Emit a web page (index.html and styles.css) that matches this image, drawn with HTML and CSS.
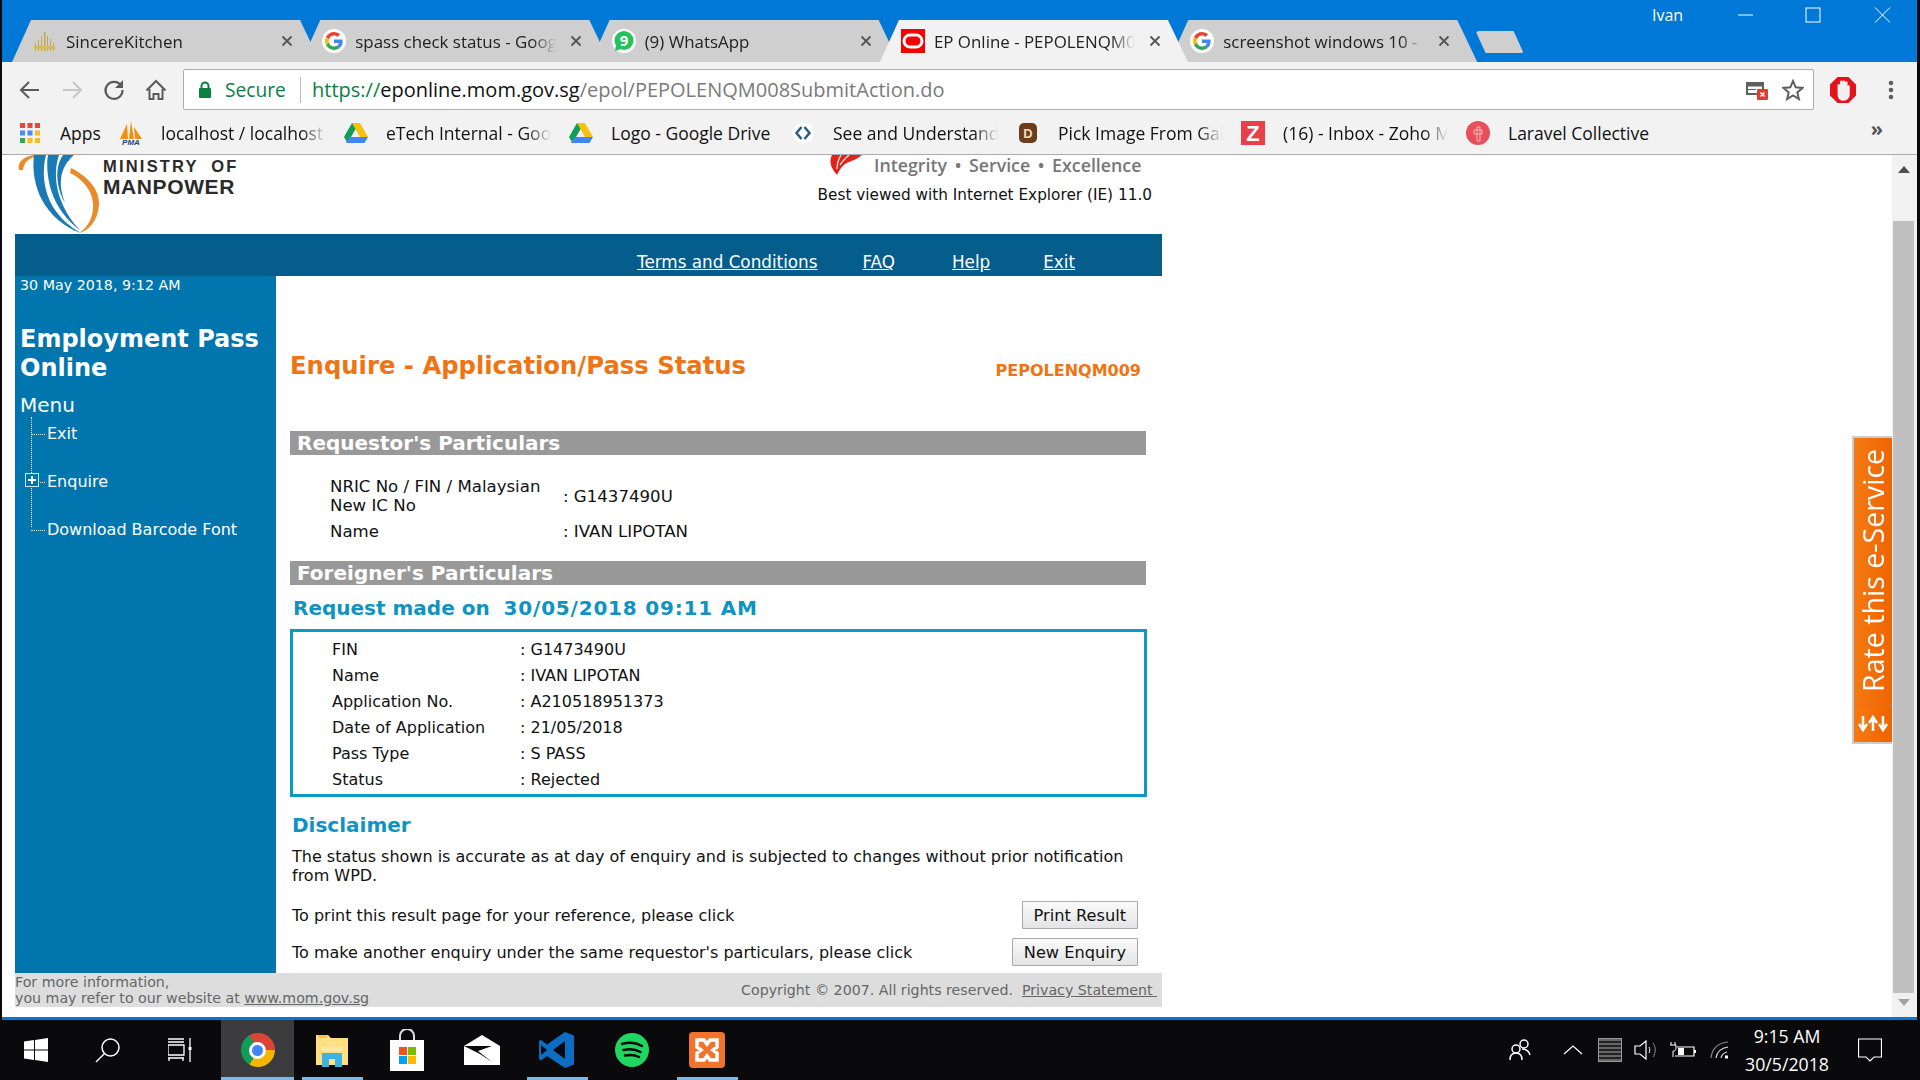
FILE: index.html
```html
<!DOCTYPE html>
<html lang="en">
<head>
<meta charset="utf-8">
<title>EP Online - PEPOLENQM009</title>
<link rel="stylesheet" href="styles.css">
</head>
<body>
<svg class="defs" width="0" height="0" aria-hidden="true">
  <symbol id="g" viewBox="-8 -8 64 64">
    <circle cx="24" cy="24" r="32" fill="#fff"/>
    <path fill="#EA4335" d="M24 9.5c3.54 0 6.71 1.22 9.21 3.6l6.85-6.85C35.9 2.38 30.47 0 24 0 14.62 0 6.51 5.38 2.56 13.22l7.98 6.19C12.43 13.72 17.74 9.5 24 9.5z"/>
    <path fill="#4285F4" d="M46.98 24.55c0-1.57-.15-3.09-.38-4.55H24v9.02h12.94c-.58 2.96-2.26 5.48-4.78 7.18l7.73 6c4.51-4.18 7.09-10.36 7.09-17.65z"/>
    <path fill="#FBBC05" d="M10.53 28.59c-.48-1.45-.76-2.99-.76-4.59s.27-3.14.76-4.59l-7.98-6.19C.92 16.46 0 20.12 0 24c0 3.88.92 7.54 2.56 10.78l7.97-6.19z"/>
    <path fill="#34A853" d="M24 48c6.48 0 11.93-2.13 15.89-5.81l-7.73-6c-2.15 1.45-4.92 2.3-8.16 2.3-6.26 0-11.57-4.22-13.47-9.91l-7.98 6.19C6.51 42.62 14.62 48 24 48z"/>
  </symbol>
  <symbol id="drive" viewBox="0 0 24 22">
    <path fill="#0f9d58" d="M8 1h7L7 15l-3.500 6L0 15z"/>
    <path fill="#f4c20d" d="M8 1h8l8 14h-8z"/>
    <path fill="#4285f4" d="M5.500 15H24l-3.500 6H2z"/>
  </symbol>
  <symbol id="x" viewBox="0 0 12 12">
    <path d="M1.500 1.500l9 9M10.500 1.500l-9 9" stroke="#555" stroke-width="1.800" fill="none"/>
  </symbol>
</svg>

<div class="window">
  <header class="titlebar">
    <div class="winctl">
      <span class="user">Ivan</span>
      <svg class="ctl" width="20" height="12" viewBox="0 0 20 12"><path d="M4 6h15" stroke="#fff"/></svg>
      <svg class="ctl" width="20" height="16" viewBox="0 0 20 16"><rect x="3" y="1" width="14" height="14" fill="none" stroke="#fff"/></svg>
      <svg class="ctl" width="20" height="16" viewBox="0 0 20 16"><path d="M3 0.500l15 15M18 0.500l-15 15" stroke="#fff" fill="none"/></svg>
    </div>
    <div class="tabs">
      <div class="tab">
        <svg class="fav" width="24" height="20" viewBox="0 0 24 20"><path d="M2 20V12h1v8zM5 20V9h1v11zM8 20V5h1v15zM11 20V1h1.500v19zM14 20V5h1v15zM17 20V8h1v12zM20 20V12h1v8z" fill="#c9a64a"/><path d="M1 15h21v3H1z" fill="#d9b95f"/></svg>
        <span class="tab-title">SincereKitchen</span>
        <svg class="tab-x" width="12" height="12"><use href="#x"/></svg>
      </div>
      <div class="tab">
        <svg class="fav" width="24" height="24"><use href="#g"/></svg>
        <span class="tab-title">spass check status - Goog</span>
        <svg class="tab-x" width="12" height="12"><use href="#x"/></svg>
      </div>
      <div class="tab">
        <svg class="fav" width="24" height="24" viewBox="0 0 24 24"><circle cx="12" cy="12" r="12" fill="#fff"/><circle cx="12" cy="11.500" r="9.500" fill="#25c15b"/><path d="M4 16l-1 6 6-2z" fill="#25c15b"/><text x="12" y="16.500" class="wa">9</text></svg>
        <span class="tab-title">(9) WhatsApp</span>
        <svg class="tab-x" width="12" height="12"><use href="#x"/></svg>
      </div>
      <div class="tab tab-active">
        <svg class="fav" width="24" height="24" viewBox="0 0 24 24"><rect width="24" height="24" fill="#f80000"/><rect x="3" y="6" width="18" height="12" rx="6" fill="none" stroke="#fff" stroke-width="3"/></svg>
        <span class="tab-title">EP Online - PEPOLENQM0</span>
        <svg class="tab-x" width="12" height="12"><use href="#x"/></svg>
      </div>
      <div class="tab">
        <svg class="fav" width="24" height="24"><use href="#g"/></svg>
        <span class="tab-title">screenshot windows 10 -</span>
        <svg class="tab-x" width="12" height="12"><use href="#x"/></svg>
      </div>
      <div class="newtab"></div>
    </div>
  </header>

  <div class="toolbar">
    <svg class="nav" width="22" height="20" viewBox="0 0 22 20"><path d="M20 10H3M10 2l-8 8 8 8" fill="none" stroke="#5a5a5a" stroke-width="2"/></svg>
    <svg class="nav" width="22" height="20" viewBox="0 0 22 20"><path d="M2 10h17M12 2l8 8-8 8" fill="none" stroke="#c8c8c8" stroke-width="2"/></svg>
    <svg class="nav" width="22" height="22" viewBox="0 0 22 22"><path d="M18 6.500A8.500 8.500 0 1 0 19.500 11" fill="none" stroke="#5a5a5a" stroke-width="2.200"/><path d="M20 1v8h-8z" fill="#5a5a5a"/></svg>
    <svg class="nav" width="22" height="22" viewBox="0 0 22 22"><path d="M1.500 11.500L11 2l9.500 9.500M4.500 10v10h4v-5h5v5h4V10" fill="none" stroke="#5a5a5a" stroke-width="2"/></svg>
    <div class="omnibox">
      <svg class="lock" width="14" height="18" viewBox="0 0 14 18"><path d="M3.500 8V5a3.500 3.500 0 0 1 7 0v3" fill="none" stroke="#0b8043" stroke-width="2"/><rect x="1" y="7" width="12" height="10" rx="1" fill="#0b8043"/></svg>
      <span class="secure">Secure</span>
      <span class="sep"></span>
      <span class="url"><span class="url-g">https://</span><span class="url-d">eponline.mom.gov.sg</span>/epol/PEPOLENQM008SubmitAction.do</span>
      <svg class="omni-ic" width="22" height="20" viewBox="0 0 22 20"><path d="M1 3h16v11H1z" fill="none" stroke="#5f5f5f" stroke-width="2"/><path d="M1 3h16v3H1zM1 9.500h9" fill="#5f5f5f" stroke="#5f5f5f"/><rect x="11" y="9" width="11" height="11" rx="1" fill="#dd3b33"/><path d="M14.500 12.500l4 4M18.500 12.500l-4 4" stroke="#fff" stroke-width="1.500"/></svg>
      <svg class="omni-ic omni-star" width="22" height="22" viewBox="0 0 22 22"><path d="M11 2l2.700 6.300 6.800.6-5.200 4.500 1.600 6.700L11 16.500 5.100 20.100l1.600-6.700L1.500 8.900l6.800-.6z" fill="none" stroke="#5f5f5f" stroke-width="2"/></svg>
    </div>
    <svg class="stop" width="24" height="24" viewBox="0 0 24 24"><path d="M7 0h10l7 7v10l-7 7H7l-7-7V7z" fill="#e4121b"/><path d="M7 7.500a1.100 1.100 0 0 1 2.200 0V4.500a1.200 1.200 0 0 1 2.400 0a1.200 1.200 0 0 1 2.400 0V5a1.100 1.100 0 0 1 2.200 0v3.500a1 1 0 0 1 2 0V16c0 3-2 6-6 6s-5-3-5.200-6z" fill="#f1f1f1"/></svg>
    <svg class="dots" width="6" height="20" viewBox="0 0 6 20"><circle cx="3" cy="3" r="2.300" fill="#5f5f5f"/><circle cx="3" cy="10" r="2.300" fill="#5f5f5f"/><circle cx="3" cy="17" r="2.300" fill="#5f5f5f"/></svg>
  </div>

  <nav class="bookmarks">
    <div class="bm bm-apps">
      <svg class="bm-ic" width="20" height="20" viewBox="0 0 20 20"><g fill="#e8453c"><rect width="5" height="5"/><rect x="7.500" width="5" height="5"/><rect x="15" width="5" height="5"/></g><g fill="#4a8af4"><rect y="7.500" width="5" height="5"/><rect x="7.500" y="7.500" width="5" height="5"/></g><rect x="15" y="7.500" width="5" height="5" fill="#f9bb2d"/><g fill="#34a853"><rect y="15" width="5" height="5"/></g><g fill="#f9bb2d"><rect x="7.500" y="15" width="5" height="5"/></g><rect x="15" y="15" width="5" height="5" fill="#f9bb2d"/></svg>
      <span class="bm-text bm-full">Apps</span>
    </div>
    <div class="bm">
      <svg class="bm-ic" width="24" height="24" viewBox="0 0 24 24"><path d="M1 18L8 3l1 15zM10 18l2-18 3 18zM16 18l-1-12 8 12z" fill="#f29111"/><text x="12" y="24" class="pma">PMA</text></svg>
      <span class="bm-text">localhost / localhost</span>
    </div>
    <div class="bm">
      <svg class="bm-ic" width="24" height="22"><use href="#drive"/></svg>
      <span class="bm-text">eTech Internal - Goog</span>
    </div>
    <div class="bm bm-short">
      <svg class="bm-ic" width="24" height="22"><use href="#drive"/></svg>
      <span class="bm-text bm-full">Logo - Google Drive</span>
    </div>
    <div class="bm">
      <svg class="bm-ic" width="22" height="22" viewBox="0 0 22 22"><circle cx="11" cy="11" r="10.500" fill="#fff"/><path d="M9.500 5l-5 6 5 6M12.500 5l5 6-5 6" fill="none" stroke="#2b5d7d" stroke-width="2.500"/></svg>
      <span class="bm-text">See and Understand</span>
    </div>
    <div class="bm">
      <svg class="bm-ic" width="18" height="20" viewBox="0 0 18 20"><rect width="18" height="20" rx="5" fill="#6d3d1a"/><text x="9" y="15" class="dee">D</text></svg>
      <span class="bm-text">Pick Image From Gal</span>
    </div>
    <div class="bm">
      <svg class="bm-ic" width="24" height="24" viewBox="0 0 24 24"><rect width="24" height="24" fill="#e8404a"/><text x="12" y="20" class="zed">Z</text></svg>
      <span class="bm-text">(16) - Inbox - Zoho M</span>
    </div>
    <div class="bm">
      <svg class="bm-ic" width="24" height="24" viewBox="0 0 24 24"><circle cx="12" cy="12" r="12" fill="#e5505a"/><path d="M8 9h8v4H8zM11 6h3v14h-3z" fill="none" stroke="#f5b5b9"/></svg>
      <span class="bm-text bm-full">Laravel Collective</span>
    </div>
    <span class="chev">»</span>
  </nav>

  <div class="viewport">
    <div class="page">
      <div class="page-head">
        <div class="logo">
          <svg class="logo-mark" width="88" height="79" viewBox="0 0 88 79">
            <path d="M4 15C2 8 8 1 20 0L21 2C13 3 9 8 8 15z" fill="#e98a2b"/>
            <path d="M19 0L31 0C27 15 28 35 38 52C45 63 55 72 66 78C50 73 35 60 27 45C20 32 17 15 19 0z" fill="#1a7ab5"/>
            <path d="M33 0L44 0C39 14 40 32 47 48C52 60 58 68 66 76C52 66 42 52 37 38C33 26 31 12 33 0z" fill="#1a7ab5"/>
            <path d="M48 0L59 0C52 6 47 14 46 24C45 32 47 40 50 48C43 36 41 22 43 12C44 7 46 3 48 0z" fill="#1a7ab5"/>
            <path d="M56 13C70 20 84 32 84 48C84 64 74 76 64 78C74 72 79 60 78 48C77 36 68 24 55 18z" fill="#e98a2b"/>
          </svg>
          <div class="logo-text">
            <span class="logo-1">MINISTRY OF</span>
            <span class="logo-2">MANPOWER</span>
          </div>
        </div>
        <div class="head-right">
          <div class="motto">
            <svg width="33" height="20" viewBox="0 0 33 20"><path d="M3 0C0 6 1 12 8 20C11 14 14 9 20 7C25 5 30 3 33 0z" fill="#e2231a"/><path d="M12 0C9 5 8 9 8 14M20 0C16 4 13 6 11 10" stroke="#fff" stroke-width="1.200" fill="none"/></svg>
            <span>Integrity &#8226; Service &#8226; Excellence</span>
          </div>
          <div class="best">Best viewed with Internet Explorer (IE) 11.0</div>
        </div>
      </div>

      <div class="topnav">
        <a href="#">Terms and Conditions</a>
        <a href="#">FAQ</a>
        <a href="#">Help</a>
        <a href="#">Exit</a>
      </div>

      <div class="layout">
        <aside class="sidebar">
          <div class="date">30 May 2018, 9:12 AM</div>
          <h2 class="side-title">Employment Pass Online</h2>
          <div class="menu-label">Menu</div>
          <ul class="tree">
            <li>Exit</li>
            <li class="has-plus"><span class="plus"></span>Enquire</li>
            <li>Download Barcode Font</li>
          </ul>
        </aside>
        <main class="content">
          <div class="title-row">
            <h1 class="page-title">Enquire - Application/Pass Status</h1>
            <span class="code">PEPOLENQM009</span>
          </div>
          <h3 class="bar">Requestor's Particulars</h3>
          <div class="req">
            <span>NRIC No / FIN / Malaysian<br>New IC No</span><span>: G1437490U</span>
            <span>Name</span><span>: IVAN LIPOTAN</span>
          </div>
          <h3 class="bar bar-2">Foreigner's Particulars</h3>
          <div class="request">Request made on&nbsp; <span class="request-date">30/05/2018 09:11 AM</span></div>
          <div class="box">
            <span>FIN</span><span>: G1473490U</span>
            <span>Name</span><span>: IVAN LIPOTAN</span>
            <span>Application No.</span><span>: A210518951373</span>
            <span>Date of Application</span><span>: 21/05/2018</span>
            <span>Pass Type</span><span>: S PASS</span>
            <span>Status</span><span>: Rejected</span>
          </div>
          <div class="disc-title">Disclaimer</div>
          <p class="disc">The status shown is accurate as at day of enquiry and is subjected to changes without prior notification from WPD.</p>
          <div class="action action-1"><span>To print this result page for your reference, please click</span><button class="btn">Print Result</button></div>
          <div class="action"><span>To make another enquiry under the same requestor's particulars, please click</span><button class="btn">New Enquiry</button></div>
        </main>
      </div>

      <footer class="foot">
        <div class="foot-l">For more information,<br>you may refer to our website at <a href="#">www.mom.gov.sg</a></div>
        <div class="foot-r">Copyright &copy; 2007. All rights reserved. &nbsp;<a href="#">Privacy Statement&nbsp;</a></div>
      </footer>

      <div class="rate">
        <span class="rate-text">Rate this e-Service</span>
        <span class="rate-ic"><svg width="30" height="18" viewBox="0 0 30 18"><path d="M5 1v11M1 9l4 6 4-6M15 16V5M11 8l4-6 4 6M25 1v11M21 9l4 6 4-6" fill="none" stroke="#fff" stroke-width="2.500"/></svg></span>
      </div>
    </div>
    <div class="scrollbar">
      <span class="arrow-up"></span>
      <span class="thumb"></span>
      <span class="arrow-down"></span>
    </div>
  </div>
</div>

<footer class="taskbar">
  <svg class="tb" width="24" height="24" viewBox="0 0 24 24"><path d="M0 3.500l10-1.400V11.500H0zM11 2l13-2v11.500H11zM0 12.500h10v9.400L0 20.500zM11 12.500h13V24l-13-2z" fill="#fff"/></svg>
  <span class="tb-cell tb-search"><svg width="26" height="26" viewBox="0 0 26 26"><circle cx="15.500" cy="10.500" r="8.500" fill="none" stroke="#fff" stroke-width="1.500"/><path d="M9.500 16.500L1 25" stroke="#fff" stroke-width="1.500"/></svg></span>
  <span class="tb-cell tb-task"><svg width="24" height="24" viewBox="0 0 24 24"><path d="M0 1h16M0 4h16M0 7h16v10H0zM0 20h16M1 20v3M15 20v3M22 0v24" fill="none" stroke="#fff" stroke-width="1.300"/><rect x="20.500" y="9" width="3" height="3" fill="#fff"/></svg></span>
  <span class="tb-cell tb-chrome"><span class="chrome"><span class="chrome-in"></span></span></span>
  <span class="tb-cell tb-on"><svg width="32" height="34" viewBox="0 0 32 34"><path d="M0 2h12l3 3h17v27H0z" fill="#ffe083"/><path d="M2 2h9v3H2z" fill="#f6c343"/><path d="M6 14h20v4H6z" fill="#ffe9a8"/><path d="M6 34V20h20v14h-7v-8h-6v8z" fill="#3fb1e3"/></svg></span>
  <span class="tb-cell"><svg width="36" height="42" viewBox="0 0 36 42"><path d="M11 12V7a7 7 0 0 1 14 0v5" fill="none" stroke="#ddd" stroke-width="2"/><path d="M1 11h34v31H1z" fill="#fff"/><rect x="10" y="18" width="8" height="8" fill="#f25022"/><rect x="19" y="18" width="8" height="8" fill="#7fba00"/><rect x="10" y="27" width="8" height="8" fill="#00a4ef"/><rect x="19" y="27" width="8" height="8" fill="#ffb900"/></svg></span>
  <span class="tb-cell"><svg width="36" height="30" viewBox="0 0 36 30"><path d="M0 11L18 0l18 11v19H0z" fill="#fff"/><path d="M0 11h28L14 16l14 11-12-8z" fill="#0a0a0c"/></svg></span>
  <span class="tb-cell tb-on"><svg width="36" height="36" viewBox="0 0 36 36"><path d="M26 0l9 3.500v29L26 36 8 24l-6 4.500L0 27V9l2-1 6 4.500zM26 9L14 18l12 9z" fill="#0b6ec4"/><path d="M2 13l6 5-6 5z" fill="#0a0a0c"/></svg></span>
  <span class="tb-cell"><svg width="34" height="34" viewBox="0 0 34 34"><circle cx="17" cy="17" r="17" fill="#1ed760"/><path d="M7 11c7-2 14-1.500 20 2M8.500 17c6-1.500 12-1 17 2M10 22.500c5-1 10-.7 14 1.500" fill="none" stroke="#0a0a0c" stroke-width="2.500" stroke-linecap="round"/></svg></span>
  <span class="tb-cell tb-on"><svg width="36" height="36" viewBox="0 0 36 36"><rect width="36" height="36" rx="4" fill="#f0742b"/><path d="M8 8h7l3 4 3-4h7v7l-4 3 4 3v7h-7l-3-4-3 4H8v-7l4-3-4-3z" fill="none" stroke="#fff" stroke-width="3.500"/></svg></span>
  <div class="tray">
    <svg class="tr-people" width="22" height="24" viewBox="0 0 22 24"><circle cx="15" cy="6" r="4" fill="none" stroke="#fff" stroke-width="1.500"/><circle cx="7" cy="11" r="4" fill="none" stroke="#fff" stroke-width="1.500"/><path d="M1 22c0-4 2-7 6-7s6 3 6 7M13 11c4 0 7 2 8 6" fill="none" stroke="#fff" stroke-width="1.500"/></svg>
    <svg class="tr-caret" width="20" height="10" viewBox="0 0 20 10"><path d="M1 9l9-8 9 8" fill="none" stroke="#fff" stroke-width="1.200"/></svg>
    <span class="tr-disp"></span>
    <svg class="tr-vol" width="24" height="20" viewBox="0 0 24 20"><path d="M1 6h5l6-5v18l-6-5H1z" fill="none" stroke="#fff" stroke-width="1.200"/><path d="M15 7c1 2 1 4 0 6" fill="none" stroke="#fff"/><path d="M19 3c3 4 3 10 0 14" fill="none" stroke="#888"/></svg>
    <svg class="tr-bat" width="26" height="16" viewBox="0 0 26 16"><path d="M7 5h17v9H5" fill="none" stroke="#fff" stroke-width="1.200"/><rect x="8" y="6" width="6" height="7" fill="#fff"/><rect x="24" y="8" width="2" height="3" fill="#fff"/><path d="M1 0v3M5 0v3M0 3h6v3c0 2-1 3-3 3v6" fill="none" stroke="#fff"/></svg>
    <svg class="tr-wifi" width="20" height="18" viewBox="0 0 20 18"><path d="M1 17C2 8 8 2 18 1" fill="none" stroke="#888" stroke-width="1.200"/><path d="M6 17C7 11 11 7 18 6M11 17c.5-3 2.500-5 6-6" fill="none" stroke="#ddd" stroke-width="1.200"/><rect x="15" y="14.500" width="3" height="3" fill="#fff"/></svg>
    <div class="clock"><span>9:15 AM</span><span>30/5/2018</span></div>
    <svg class="tr-note" width="24" height="24" viewBox="0 0 24 24"><path d="M.500 1h23v18H16l-4 4-4-4H.500z" fill="none" stroke="#fff" stroke-width="1.200"/></svg>
  </div>
</footer>
</body>
</html>
```
FILE: styles.css
```css
* { box-sizing: border-box; }
html, body { margin: 0; padding: 0; height: 1080px; overflow: hidden; }
body { background: #0a0a0c; font-family: "DejaVu Sans", Verdana, sans-serif; color: #111; }
.defs { position: absolute; }
.window { margin-left: 2px; width: 1915px; height: 1020px; background: #0078d7; display: flex; flex-direction: column; padding-bottom: 3px; }

/* title bar + tabs */
.titlebar { height: 62px; flex: none; position: relative; font-family: "Open Sans", sans-serif; }
.winctl { position: absolute; right: 0; top: 6px; display: flex; align-items: center; height: 18px; color: #fff; }
.user { font-size: 16px; width: 40px; margin-right: 42px; }
.ctl { margin-right: 49px; }
.ctl:last-child { margin-right: 25px; }
.tabs { display: flex; padding: 20px 0 0 10px; height: 62px; }
.tab { width: 308px; height: 42px; margin-right: -18.7px; background: #cfcfcf; flex: none; display: flex; align-items: center; padding-left: 21px; clip-path: polygon(0 100%, 19px 0, 288px 0, 100% 100%); font-size: 16.900px; color: #222; }
.tab-active { background: #f2f2f2; z-index: 2; }
.fav { flex: none; width: 24px; margin-right: 9px; }
.tab-title { width: 201px; white-space: nowrap; overflow: hidden; -webkit-mask-image: linear-gradient(90deg, #000 88%, transparent); mask-image: linear-gradient(90deg, #000 88%, transparent); }
.tab-x { flex: none; margin-left: 14px; }
.newtab { width: 48px; height: 22px; margin: 11px 0 0 17px; background: #cfcfcf; clip-path: polygon(10px 100%, 0 0, 38px 0, 100% 100%); border-radius: 3px; flex: none; }
.wa { font: 700 15px "Open Sans", sans-serif; fill: #fff; text-anchor: middle; }
.pma { font: italic 700 8px "Liberation Sans", sans-serif; fill: #2b3f87; text-anchor: middle; }
.dee { font: 700 13px "Liberation Sans", sans-serif; fill: #eedcc0; text-anchor: middle; }
.zed { font: 700 22px "Liberation Sans", sans-serif; fill: #fff; text-anchor: middle; }

/* toolbar */
.toolbar { height: 48px; flex: none; background: #f2f2f2; display: flex; align-items: center; padding: 7px 0 0 17px; font-family: "Open Sans", sans-serif; }
.nav { flex: none; margin-right: 20px; }
.omnibox { flex: none; width: 1631px; height: 41px; margin-left: -4px; background: #fff; border: 1px solid #adadad; border-radius: 2px; display: flex; align-items: center; padding-left: 14px; }
.lock { flex: none; margin-right: 13px; }
.secure { color: #0b8043; font-size: 19.200px; width: 75px; }
.sep { width: 1px; height: 26px; background: #bbb; margin-right: 11px; }
.url { color: #7a7a7a; white-space: nowrap; flex: 1; font-size: 20px; }
.url-g { color: #0b8043; }
.url-d { color: #111; }
.omni-ic { flex: none; margin-right: 14px; }
.omni-star { margin-right: 9px; }
.stop { flex: none; margin: 0 0 0 16px; width: 26px; height: 26px; }
.dots { flex: none; margin-left: 32px; }

/* bookmarks */
.bookmarks { height: 45px; flex: none; background: #f2f2f2; border-bottom: 1px solid #aaa; display: flex; align-items: center; padding: 1px 0 0 16px; font-family: "Open Sans", sans-serif; font-size: 17.500px; color: #111; position: relative; }
.bm { flex: none; width: 225px; display: flex; align-items: center; position: relative; }
.bm-short { width: 222px; }
.bm-apps { width: 101px; }
.bm-ic { flex: none; width: 24px; margin-right: 18px; }
.bm-apps .bm-ic { width: 20px; margin: 0 20px 0 2px; }
.bm-text { width: 165px; white-space: nowrap; overflow: hidden; -webkit-mask-image: linear-gradient(90deg, #000 85%, transparent); mask-image: linear-gradient(90deg, #000 85%, transparent); }
.bm-full { width: auto; -webkit-mask-image: none; mask-image: none; }
.chev { position: absolute; right: 34px; top: 5px; font-size: 20px; color: #555; font-weight: 700; }

/* page viewport */
.viewport { flex: 1; display: flex; background: #fff; min-height: 0; padding-left: 1px; }
.page { flex: 1; position: relative; overflow: hidden; padding-left: 12px; }
.page-head { width: 1147px; height: 79px; display: flex; justify-content: space-between; }
.logo { display: flex; }
.logo-mark { filter: blur(.4px); }
.logo-text { padding-top: 2px; display: flex; flex-direction: column; font-family: "Liberation Sans", sans-serif; font-weight: 700; color: #2a2a2a; width: 134px; }
.logo-1 { font-size: 16.500px; line-height: 18px; letter-spacing: 2.200px; word-spacing: 6px; white-space: nowrap; }
.logo-2 { font-size: 21px; line-height: 24px; letter-spacing: .6px; white-space: nowrap; }
.head-right { width: 347px; padding-right: 10px; display: flex; flex-direction: column; align-items: flex-end; }
.motto { display: flex; align-items: flex-start; font-family: "Open Sans", sans-serif; font-size: 17.800px; color: #777; height: 28px; width: 323px; white-space: nowrap; }
.motto svg { flex: none; margin: 0 12px 0 0; }
.motto span { font-weight: 600; line-height: 20px; word-spacing: 3px; }
.best { font-size: 15.300px; line-height: 24px; white-space: nowrap; color: #111; }

.topnav { width: 1147px; height: 42px; background: #045d8b; display: flex; padding: 18px 0 0 622px; font-size: 16.800px; }
.topnav a { color: #fff; }
.topnav a:nth-child(1) { margin-right: 45px; }
.topnav a:nth-child(2) { margin-right: 57px; }
.topnav a:nth-child(3) { margin-right: 53px; }
.layout { width: 1147px; height: 697px; display: flex; }
.sidebar { flex: none; width: 261px; background: #0075ae; color: #fff; padding-left: 5px; }
.date { font-size: 14.250px; line-height: 18px; white-space: nowrap; }
.side-title { margin: 31px 0 0; font-size: 24px; line-height: 29px; font-weight: 700; }
.menu-label { font-size: 20px; line-height: 28px; margin-top: 8px; height: 19px; }
.tree { position: relative; list-style: none; margin: 0; padding: 0 0 0 27px; font-size: 16px; }
.tree::before { content: ""; position: absolute; left: 11px; top: 7px; height: 110px; border-left: 1px dotted #fff; }
.tree li { height: 48px; line-height: 48px; position: relative; }
.tree li::before { content: ""; position: absolute; left: -16px; top: 24px; width: 14px; border-top: 1px dotted #fff; }
.plus { position: absolute; left: -22px; top: 15px; width: 14px; height: 14px; border: 1px solid #cfe6f2; background: #0075ae; z-index: 1; }
.plus::before { content: ""; position: absolute; left: 2px; top: 5px; width: 8px; height: 2px; background: #fff; }
.plus::after { content: ""; position: absolute; left: 5px; top: 2px; width: 2px; height: 8px; background: #fff; }

.content { flex: 1; padding-left: 14px; font-size: 16px; color: #111; }
.title-row { height: 38px; margin-top: 70px; width: 857px; display: flex; justify-content: space-between; align-items: center; padding-right: 6px; }
.page-title { margin: 0; font-size: 24.300px; font-weight: 700; color: #ef7414; white-space: nowrap; }
.code { font-size: 16px; font-weight: 700; color: #ef7414; padding-top: 10px; }
.bar { margin: 47px 0 0; width: 856px; height: 24px; line-height: 25px; background: #999; color: #fff; font-size: 20px; font-weight: 700; padding-left: 7px; }
.bar-2 { margin-top: 0; }
.req { display: grid; grid-template-columns: 233px 1fr; align-items: center; padding: 22px 0 0 40px; height: 106px; line-height: 19px; row-gap: 7px; align-content: start; font-size: 16.600px; }
.request { margin: 11px 0 0 3px; font-size: 20px; font-weight: 700; color: #0e93c2; line-height: 24px; height: 33px; white-space: nowrap; }
.request-date { letter-spacing: .8px; }
.box { width: 857px; height: 168px; border: 3px solid #0e9ac8; padding: 4px 0 0 39px; display: grid; grid-template-columns: 188px 1fr; grid-auto-rows: 26px; align-items: center; align-content: start; }
.disc-title { margin: 16px 0 0 2px; font-size: 20px; font-weight: 700; color: #0e93c2; line-height: 24px; }
.disc { margin: 10px 0 0 2px; width: 850px; line-height: 19px; }
.action { display: flex; justify-content: space-between; align-items: center; height: 28px; width: 846px; margin-left: 2px; margin-top: 9px; }
.action-1 { margin-top: 16px; }
.btn { font: 16.200px "DejaVu Sans", sans-serif; height: 28px; padding: 0 11px; background: linear-gradient(#fafafa, #e4e4e4); border: 1px solid #a9a9a9; border-radius: 1px; color: #111; }
.foot { width: 1147px; height: 34px; background: #ddd; color: #666; font-size: 14.200px; display: flex; justify-content: space-between; line-height: 16px; padding: 1px 5px 0 0; }
.foot a { color: #666; }
.foot-r { padding-top: 8px; }

.rate { position: absolute; right: 0; top: 281px; width: 40px; height: 308px; background: linear-gradient(90deg, #f57a14, #ee6400); border: 2px solid #ccc; border-right: 0; display: flex; flex-direction: column; align-items: center; color: #fff; }
.rate-text { writing-mode: vertical-rl; transform: rotate(180deg); font-family: "Open Sans", sans-serif; font-size: 28.600px; line-height: 36px; height: 254px; margin-bottom: 13px; white-space: nowrap; text-align: left; }
.rate-ic { flex: 1; width: 100%; border-top: 1px solid #c9773a; display: flex; align-items: center; justify-content: center; }

.scrollbar { flex: none; width: 25px; background: #f1f1f1; display: flex; flex-direction: column; align-items: center; padding-right: 2px; }
.arrow-up { margin-top: 11px; width: 0; height: 0; border: 6px solid transparent; border-top: 0; border-bottom: 7px solid #505050; }
.thumb { width: 21px; height: 772px; margin-top: 48px; background: #c0c0c0; }
.arrow-down { margin-top: 6px; width: 0; height: 0; border: 6px solid transparent; border-bottom: 0; border-top: 7px solid #a3a3a3; }

/* taskbar */
.taskbar { height: 60px; display: flex; align-items: center; background: #0a0a0c; padding-left: 24px; color: #fff; }
.tb { flex: none; margin-right: 30px; }
.tb-cell { flex: none; width: 75px; height: 60px; display: flex; align-items: center; justify-content: center; position: relative; }
.tb-search { width: 60px; }
.tb-task { width: 83px; }
.tb-on::after, .tb-chrome::after { content: ""; position: absolute; left: 8px; right: 6px; bottom: 0; height: 3px; background: #76b9ed; }
.tb-chrome { background: #3c3c3e; width: 73px; }
.tb-chrome::after { left: 0; right: 0; }
.chrome { width: 34px; height: 34px; border-radius: 50%; background: conic-gradient(#db4437 0 90deg, #f4b400 90deg 210deg, #0f9d58 210deg 330deg, #db4437 330deg); display: flex; align-items: center; justify-content: center; }
.chrome-in { width: 17px; height: 17px; border-radius: 50%; background: #4285f4; border: 3px solid #fff; }
.tray { margin-left: auto; display: flex; align-items: center; height: 60px; padding-right: 38px; }
.tray svg, .tr-disp { flex: none; }
.tr-people { margin-right: 32px; }
.tr-caret { margin-right: 15px; }
.tr-disp { width: 24px; height: 24px; border: 1px solid #999; margin-right: 12px; background: repeating-linear-gradient(#666 0 2px, #222 2px 4px); }
.tr-vol { margin-right: 12px; }
.tr-bat { margin-right: 14px; }
.tr-wifi { margin-right: 11px; }
.clock { width: 92px; display: flex; flex-direction: column; align-items: center; font-family: "Open Sans", sans-serif; font-size: 17.700px; line-height: 28px; margin-right: 25px; white-space: nowrap; }
```
